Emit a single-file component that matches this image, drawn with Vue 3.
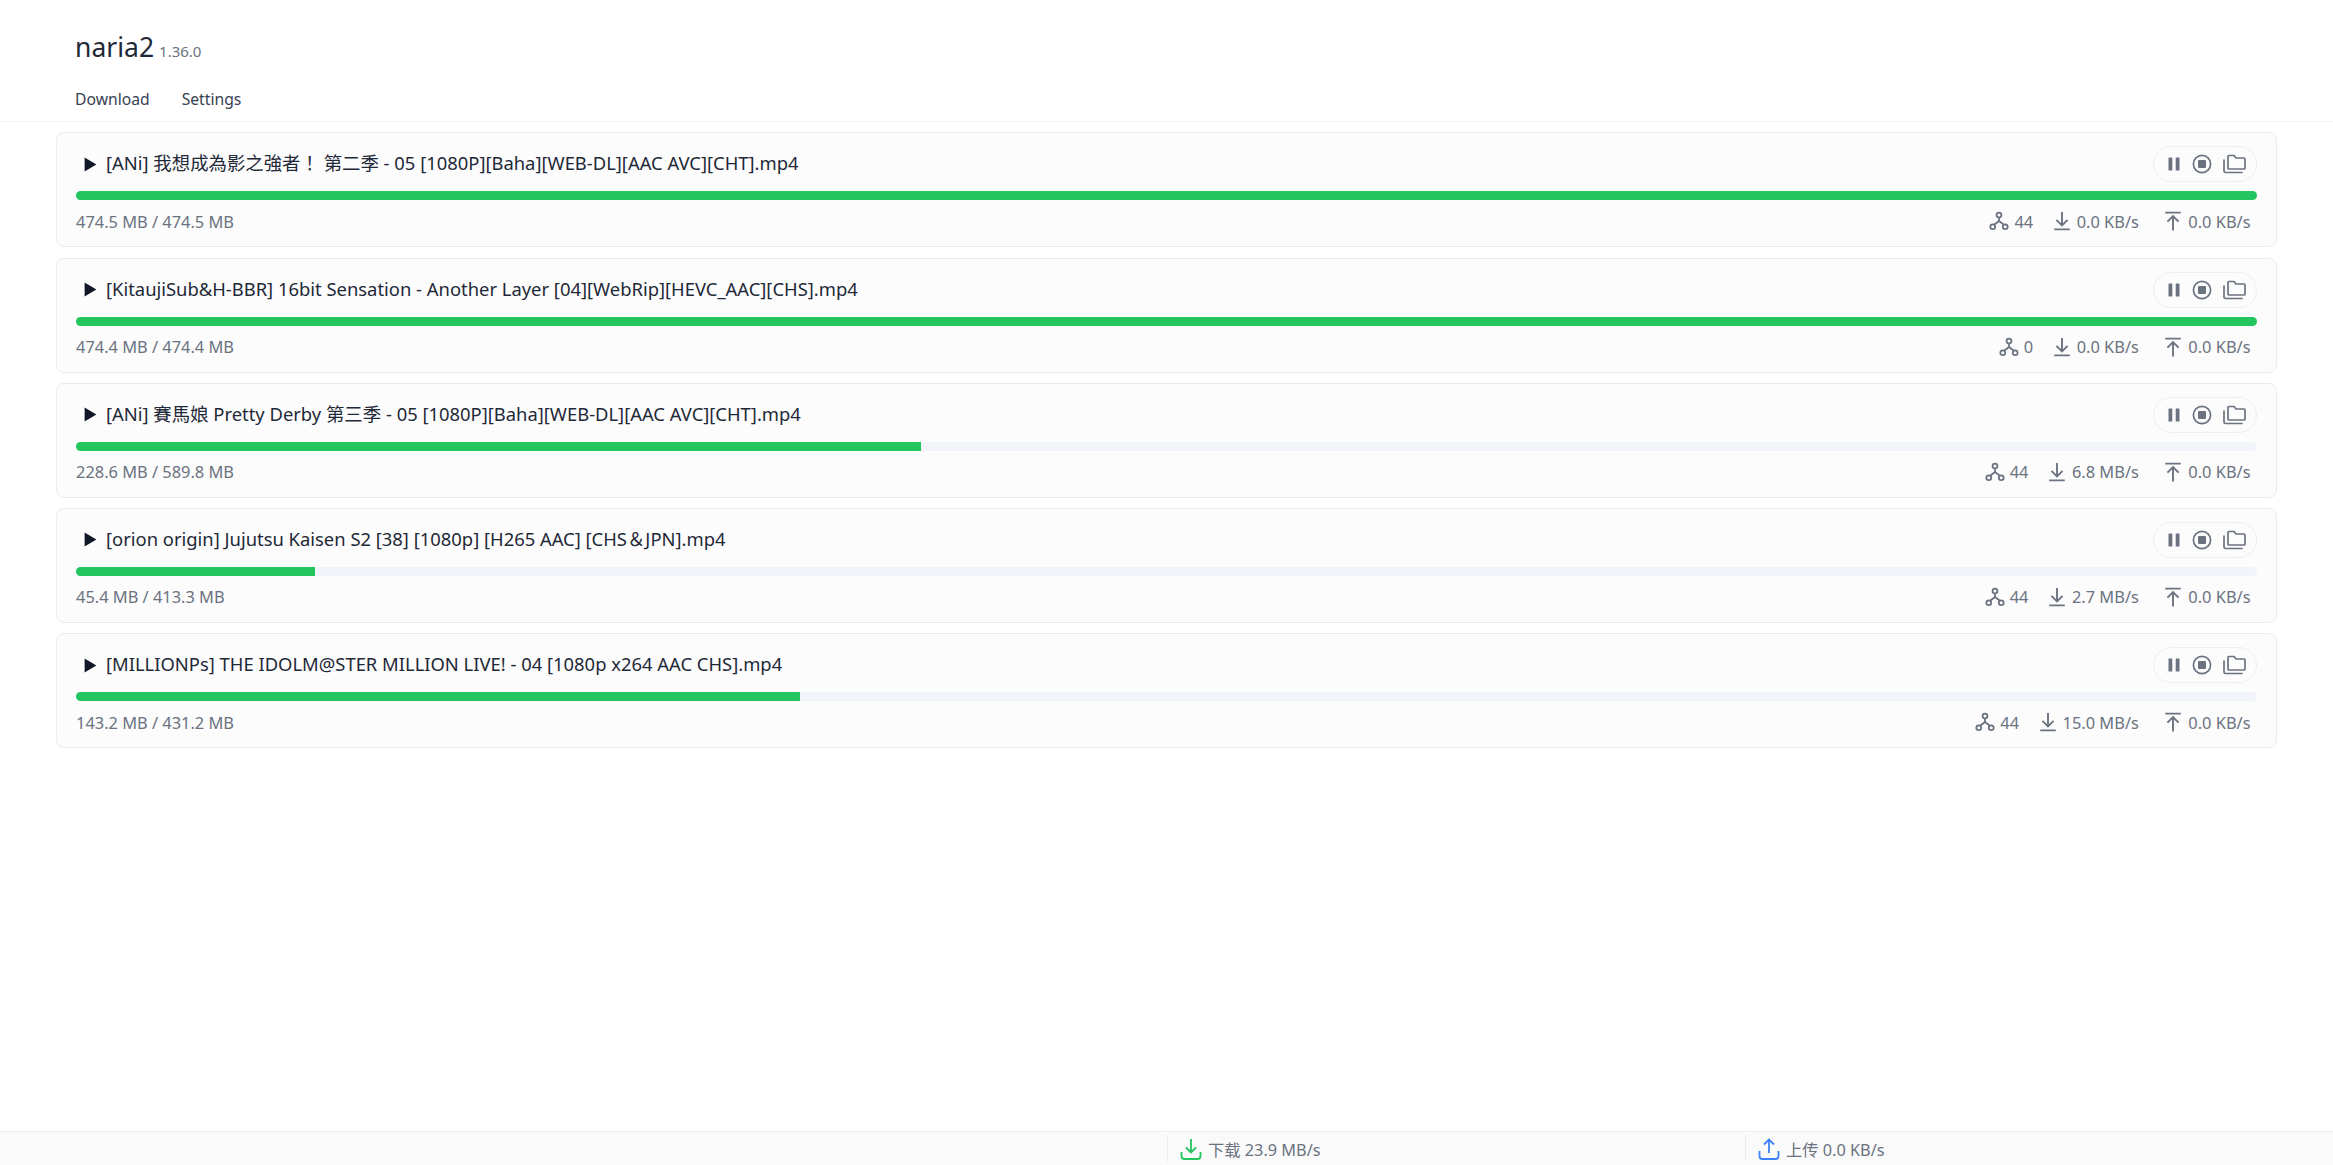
<script setup>
const tasks = [
  { name: '[ANi] 我想成為影之強者！ 第二季 - 05 [1080P][Baha][WEB-DL][AAC AVC][CHT].mp4', size: '474.5 MB / 474.5 MB', pct: 100, peers: 44, down: '0.0 KB/s', up: '0.0 KB/s' },
  { name: '[KitaujiSub&H-BBR] 16bit Sensation - Another Layer [04][WebRip][HEVC_AAC][CHS].mp4', size: '474.4 MB / 474.4 MB', pct: 100, peers: 0, down: '0.0 KB/s', up: '0.0 KB/s' },
  { name: '[ANi] 賽馬娘 Pretty Derby 第三季 - 05 [1080P][Baha][WEB-DL][AAC AVC][CHT].mp4', size: '228.6 MB / 589.8 MB', pct: 38.76, peers: 44, down: '6.8 MB/s', up: '0.0 KB/s' },
  { name: '[orion origin] Jujutsu Kaisen S2 [38] [1080p] [H265 AAC] [CHS＆JPN].mp4', size: '45.4 MB / 413.3 MB', pct: 10.98, peers: 44, down: '2.7 MB/s', up: '0.0 KB/s' },
  { name: '[MILLIONPs] THE IDOLM@STER MILLION LIVE! - 04 [1080p x264 AAC CHS].mp4', size: '143.2 MB / 431.2 MB', pct: 33.2, peers: 44, down: '15.0 MB/s', up: '0.0 KB/s' }
]
</script>

<template>
  <div class="page">
    <header class="header">
      <div class="brand">
        <span class="title">naria2</span>
        <span class="version">1.36.0</span>
      </div>
      <nav class="nav">
        <a>Download</a>
        <a>Settings</a>
      </nav>
    </header>

    <main class="list">
      <section v-for="t in tasks" :key="t.name" class="card">
        <div class="top">
          <div class="name">
            <svg class="caret" viewBox="0 0 12 14"><path d="M0.5 0.5 L11.5 7 L0.5 13.5 Z" fill="#111827" /></svg>
            <span>{{ t.name }}</span>
          </div>
          <div class="actions">
            <svg class="act pause" viewBox="0 0 20 20"><rect x="4.5" y="3.5" width="3.8" height="13" rx="0.6" fill="#6b7280" /><rect x="11.7" y="3.5" width="3.8" height="13" rx="0.6" fill="#6b7280" /></svg>
            <svg class="act" viewBox="0 0 20 20"><circle cx="10" cy="10" r="8.6" fill="none" stroke="#6b7280" stroke-width="1.7" /><rect x="6" y="6" width="8" height="8" rx="1" fill="#6b7280" /></svg>
            <svg class="act folder" viewBox="0 0 24 20"><path d="M6 14 V2.5 a1 1 0 0 1 1-1 h5 l2 2.5 h8 a1 1 0 0 1 1 1 V14 a1 1 0 0 1-1 1 H7 a1 1 0 0 1-1-1 Z" fill="none" stroke="#6b7280" stroke-width="1.7" stroke-linejoin="round" /><path d="M2 6 V17 a1.5 1.5 0 0 0 1.5 1.5 H20" fill="none" stroke="#6b7280" stroke-width="1.7" stroke-linecap="round" /></svg>
          </div>
        </div>
        <div class="track"><div class="bar" :style="{ width: t.pct + '%' }"></div></div>
        <div class="meta">
          <span class="size">{{ t.size }}</span>
          <div class="stats">
            <span class="stat">
              <svg viewBox="0 0 18 18" class="ico"><g fill="none" stroke="#6b7280" stroke-width="1.6"><circle cx="9" cy="3.6" r="2.2" /><circle cx="3.4" cy="14.2" r="2.2" /><circle cx="14.6" cy="14.2" r="2.2" /><path d="M9 5.8 V9 L4.6 12.4 M9 9 L13.4 12.4" /></g></svg>
              {{ t.peers }}
            </span>
            <span class="stat">
              <svg viewBox="0 0 18 18" class="ico"><path d="M9 1 V12.5 M4 8 L9 13 L14 8 M2 16.5 H16" fill="none" stroke="#6b7280" stroke-width="1.7" /></svg>
              {{ t.down }}
            </span>
            <span class="stat">
              <svg viewBox="0 0 18 18" class="ico"><path d="M9 17.5 V4.5 M4 9.5 L9 4.5 L14 9.5 M2 1.5 H16" fill="none" stroke="#6b7280" stroke-width="1.7" /></svg>
              {{ t.up }}
            </span>
          </div>
        </div>
      </section>
    </main>

    <footer class="footer">
      <div class="cell first">
        <svg viewBox="0 0 24 24" class="fico"><path d="M12 2 V15 M7 10.5 L12 15.5 L17 10.5" fill="none" stroke="#22c55e" stroke-width="1.8" /><path d="M2.5 15 V19 a3 3 0 0 0 3 3 H18.5 a3 3 0 0 0 3-3 V15" fill="none" stroke="#22c55e" stroke-width="1.8" /></svg>
        <span>下载 23.9 MB/s</span>
      </div>
      <div class="cell">
        <svg viewBox="0 0 24 24" class="fico"><path d="M12 16 V3 M7 7.5 L12 2.5 L17 7.5" fill="none" stroke="#3b82f6" stroke-width="1.8" /><path d="M2.5 14 V19 a3 3 0 0 0 3 3 H18.5 a3 3 0 0 0 3-3 V14" fill="none" stroke="#3b82f6" stroke-width="1.8" /></svg>
        <span>上传 0.0 KB/s</span>
      </div>
    </footer>
  </div>
</template>

<style>
html, body { margin: 0; background: #fff; }
</style>

<style scoped>
.page {
  height: 1165px;
  display: flex;
  flex-direction: column;
  font-family: "Noto Sans", "Noto Sans CJK TC", sans-serif;
  color: #1f2937;
  overflow: hidden;
}
.header {
  height: 122px;
  padding: 0 75px;
  box-sizing: border-box;
  border-bottom: 1px solid #f1f3f6;
  flex: none;
}
.brand {
  padding-top: 28px;
  display: flex;
  align-items: baseline;
  gap: 5px;
  height: 59px;
}
.title { font-size: 26.5px; line-height: 38px; color: #1f2937; }
.version { font-size: 15px; color: #6b7280; }
.nav {
  display: flex;
  gap: 32px;
  font-size: 15.7px;
  line-height: 24px;
  color: #374151;
}
.list {
  flex: 1;
  padding: 10.35px 56px 0 56px;
  display: flex;
  flex-direction: column;
  gap: 10.2px;
}
.card {
  height: 115px;
  box-sizing: border-box;
  border: 1px solid #e8ebf0;
  border-radius: 8px;
  background: #fcfcfd;
  padding: 13px 19px 0;
}
.top {
  display: flex;
  align-items: center;
  justify-content: space-between;
  height: 36px;
}
.name {
  display: flex;
  align-items: center;
  font-size: 18.4px;
  color: #1f2937;
  white-space: nowrap;
  line-height: 34px;
  padding-bottom: 2px;
}
.caret { width: 13px; height: 15px; margin: 2px 9px 0 8px; flex: none; }
.actions {
  width: 104px;
  height: 36px;
  box-sizing: border-box;
  border: 1px solid #eceef2;
  border-radius: 18px;
  display: flex;
  align-items: center;
  justify-content: center;
  gap: 8px;
}
.act { width: 20px; height: 20px; flex: none; }
.act.folder { width: 24px; margin-left: 2px; }
.track {
  margin-top: 9px;
  height: 9px;
  border-radius: 5px;
  background: #f1f4f9;
  overflow: hidden;
}
.bar { height: 100%; background: #22c55e; }
.meta {
  display: flex;
  justify-content: space-between;
  align-items: center;
  height: 42px;
  font-size: 16.4px;
  color: #6b7280;
  padding-right: 6.5px;
}
.stats { display: flex; gap: 18.5px; }
.stat { display: flex; align-items: center; gap: 5px; white-space: nowrap; }
.stat:last-child { margin-left: 6px; }
.ico { width: 20px; height: 20px; flex: none; }
.footer {
  flex: none;
  height: 34px;
  box-sizing: border-box;
  border-top: 1px solid #eeeff1;
  background: #fafafa;
  display: flex;
  padding-left: 1167px;
  font-size: 16.3px;
  color: #6b7280;
}
.cell {
  width: 578px;
  border-left: 1px solid #ececee;
  display: flex;
  align-items: center;
  gap: 5px;
  padding-left: 11px;
  box-sizing: border-box;
  margin: 3px 0;
}
.fico { width: 24px; height: 24px; flex: none; }
</style>
